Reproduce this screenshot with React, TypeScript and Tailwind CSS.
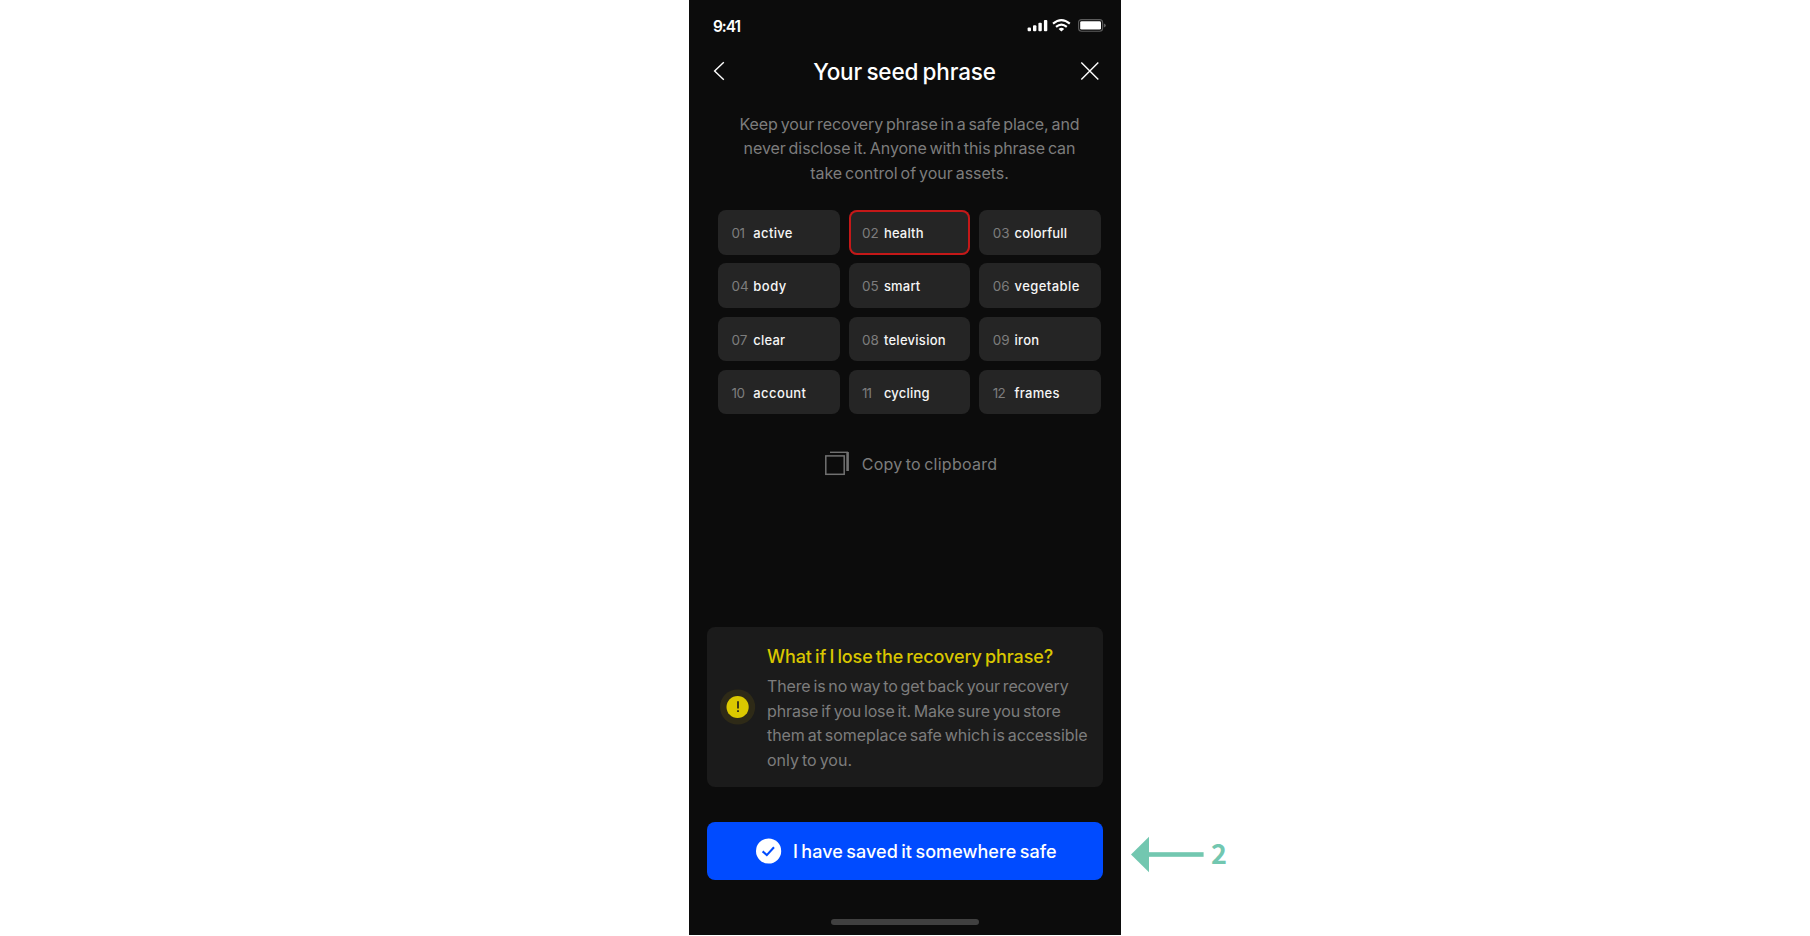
type SeedWord = { id: string; word: string; numTracking: string; wordTracking: string; marked?: boolean };

const WORDS: SeedWord[] = [
  { id: "01", word: "active", numTracking: "tracking-[-0.6px]", wordTracking: "tracking-[0.35px]" },
  { id: "02", word: "health", numTracking: "tracking-normal", wordTracking: "tracking-[0.2px]", marked: true },
  { id: "03", word: "colorfull", numTracking: "tracking-normal", wordTracking: "tracking-[0.2px]" },
  { id: "04", word: "body", numTracking: "tracking-normal", wordTracking: "tracking-[0.5px]" },
  { id: "05", word: "smart", numTracking: "tracking-normal", wordTracking: "tracking-[0.2px]" },
  { id: "06", word: "vegetable", numTracking: "tracking-normal", wordTracking: "tracking-[0.45px]" },
  { id: "07", word: "clear", numTracking: "tracking-normal", wordTracking: "tracking-[0.2px]" },
  { id: "08", word: "television", numTracking: "tracking-normal", wordTracking: "tracking-[0.27px]" },
  { id: "09", word: "iron", numTracking: "tracking-normal", wordTracking: "tracking-[0.3px]" },
  { id: "10", word: "account", numTracking: "tracking-[-0.6px]", wordTracking: "tracking-[0.4px]" },
  { id: "11", word: "cycling", numTracking: "tracking-[-1px]", wordTracking: "tracking-[0.2px]" },
  { id: "12", word: "frames", numTracking: "tracking-[-0.6px]", wordTracking: "tracking-[0.3px]" },
];

function StatusBar() {
  return (
    <header className="flex h-[52px] items-start justify-between pt-[15px] pr-[15px] pl-[24px]">
      <span className="text-[15.5px] leading-[24px] font-semibold tracking-[-1.1px]">9:41</span>
      <svg width="80" height="16" viewBox="0 0 80 16" className="mt-[3px]">
        <g fill="#fff">
          <rect x="1.6" y="9.6" width="3.4" height="3.7" rx="1" />
          <rect x="7" y="7.2" width="3.4" height="6.1" rx="1" />
          <rect x="12.4" y="4.8" width="3.4" height="8.5" rx="1" />
          <rect x="17.9" y="2" width="3.4" height="11.3" rx="1" />
        </g>
        <g fill="none" stroke="#fff" strokeWidth="2.1">
          <path d="M27 5.6Q35.4 -1.5 43.8 5.6" />
          <path d="M30 8.9Q35.4 4.4 40.8 8.9" />
        </g>
        <path d="M32.6 10.9Q35.4 8.7 38.2 10.9L35.4 13.6Z" fill="#fff" />
        <rect x="52.6" y="1.6" width="24" height="11.6" rx="3" fill="none" stroke="#5c5c5c" strokeWidth="1.1" />
        <rect x="54.2" y="3.2" width="20.8" height="8.4" rx="1.4" fill="#fff" />
        <path d="M77.9 5.4Q79.8 6 79.8 7.4T77.9 9.4Z" fill="#5c5c5c" />
      </svg>
    </header>
  );
}

function TitleBar() {
  return (
    <div className="flex h-[40px] items-start justify-between pr-[21px] pl-[24px]">
      <svg width="14" height="22" viewBox="0 0 14 22" className="mt-[8px]" fill="none" stroke="#fff" strokeWidth="1.4">
        <path d="M10.8 2.2L1.6 11L10.8 19.8" />
      </svg>
      <h1 className="mt-[5px] pl-[2px] text-[22.5px] leading-[30px] font-medium tracking-[-0.15px] whitespace-nowrap [word-spacing:-1.5px]">
        Your seed phrase
      </h1>
      <svg width="20" height="22" viewBox="0 0 20 22" className="mt-[8px]" fill="none" stroke="#fff" strokeWidth="1.4">
        <path d="M1.3 2.4L18.3 19.4M18.3 2.4L1.3 19.4" />
      </svg>
    </div>
  );
}

function SeedCard({ item }: { item: SeedWord }) {
  return (
    <li
      className={
        item.marked
          ? "flex items-baseline rounded-[8px] bg-[#252525] pt-[13px] pl-[13.5px] leading-[20px] ring-2 ring-[#c41818] ring-inset"
          : "flex items-baseline rounded-[8px] bg-[#252525] pt-[13px] pl-[13.5px] leading-[20px]"
      }
    >
      <span className={`w-[21.8px] text-[13.5px] text-[#7d7d7d] ${item.numTracking}`}>{item.id}</span>
      <span className={`text-[13px] font-[450] text-[#f6f6f6] ${item.wordTracking}`}>{item.word}</span>
    </li>
  );
}

function Warning() {
  return (
    <section className="mx-[18px] mt-[152px] flex h-[160px] items-center rounded-[8px] bg-[#1b1b1b] pl-[13px]">
      <svg width="36" height="36" viewBox="0 0 36 36" className="shrink-0">
        <circle cx="17.6" cy="18" r="17.6" fill="#2e2a17" />
        <circle cx="17.6" cy="18" r="11.1" fill="#dbc800" />
        <path d="M18 12.2V19.4M18 21.2V23" stroke="#2e2a17" strokeWidth="1.8" />
      </svg>
      <div className="ml-[11px] pt-[3px] whitespace-nowrap [word-spacing:-1.5px]">
        <h2 className="mb-[5px] text-[18px] leading-[25px] font-[450] tracking-[-0.1px] text-[#d9c600]">
          What if I lose the recovery phrase?
        </h2>
        <p className="text-[16px] leading-[24.5px] text-[#7d7d7d]">
          <span className="block tracking-[-0.13px]">There is no way to get back your recovery</span>
          <span className="block tracking-[-0.12px]">phrase if you lose it. Make sure you store</span>
          <span className="block tracking-[-0.05px]">them at someplace safe which is accessible</span>
          <span className="block tracking-normal">only to you.</span>
        </p>
      </div>
    </section>
  );
}

export default function App() {
  return (
    <div className="flex h-[936px] w-[1810px] overflow-hidden bg-white pl-[689px] font-['Inter',sans-serif]">
      <main className="flex h-[935px] w-[432px] shrink-0 flex-col bg-[#0c0c0c] text-white">
        <StatusBar />
        <TitleBar />
        <p className="mt-[20px] pl-[9px] text-center text-[16px] leading-[24.3px] whitespace-nowrap text-[#7d7d7d] [word-spacing:-1.5px]">
          <span className="block tracking-[-0.08px]">Keep your recovery phrase in a safe place, and</span>
          <span className="block tracking-[-0.08px]">never disclose it. Anyone with this phrase can</span>
          <span className="block tracking-[-0.02px]">take control of your assets.</span>
        </p>
        <ul className="mt-[25.4px] ml-[29px] grid h-[204px] w-[383px] grid-cols-3 grid-rows-4 gap-[8.8px]">
          {WORDS.map((item) => (
            <SeedCard key={item.id} item={item} />
          ))}
        </ul>
        <button className="mt-[36.7px] flex h-[24px] items-start pl-[135px] text-left">
          <svg width="27" height="25" viewBox="0 0 27 25" fill="none" stroke="#717171">
            <rect x="1.8" y="4.9" width="18.4" height="18.4" strokeWidth="1.5" />
            <path d="M6 1.3H24" strokeWidth="1.4" />
            <path d="M23.6 1V20" strokeWidth="2.6" />
          </svg>
          <span className="ml-[10.7px] text-[16px] leading-[27px] tracking-[0.26px] text-[#7d7d7d] [word-spacing:-1.5px]">
            Copy to clipboard
          </span>
        </button>
        <Warning />
        <button className="mx-[18px] mt-[35px] flex h-[58px] items-center rounded-[8px] bg-[#004bff] pl-[48px] text-left">
          <svg width="27" height="26" viewBox="0 0 27 26">
            <circle cx="13.6" cy="13" r="12.6" fill="#fff" />
            <path d="M7.6 13.4L11.8 17.1L19 9.3" fill="none" stroke="#004bff" strokeWidth="2.1" />
          </svg>
          <span className="ml-[11px] pt-[2px] text-[18px] font-[480] tracking-[0.06px] whitespace-nowrap [word-spacing:-1.5px]">
            I have saved it somewhere safe
          </span>
        </button>
        <div className="mx-auto mt-[39px] h-[6px] w-[148px] rounded-full bg-[#404040]" />
      </main>
      <aside className="flex items-start pt-[836px] pl-[10px] text-[#72c7b0]">
        <svg width="74" height="37" viewBox="0 0 74 37" fill="currentColor">
          <path d="M0 18.5L18 0.8V36.2Z" />
          <rect x="17" y="16.2" width="55.6" height="4.6" />
        </svg>
        <span className="ml-[6px] font-['Noto_Sans_CJK_SC',sans-serif] text-[27px] leading-[34px] font-bold">2</span>
      </aside>
    </div>
  );
}
